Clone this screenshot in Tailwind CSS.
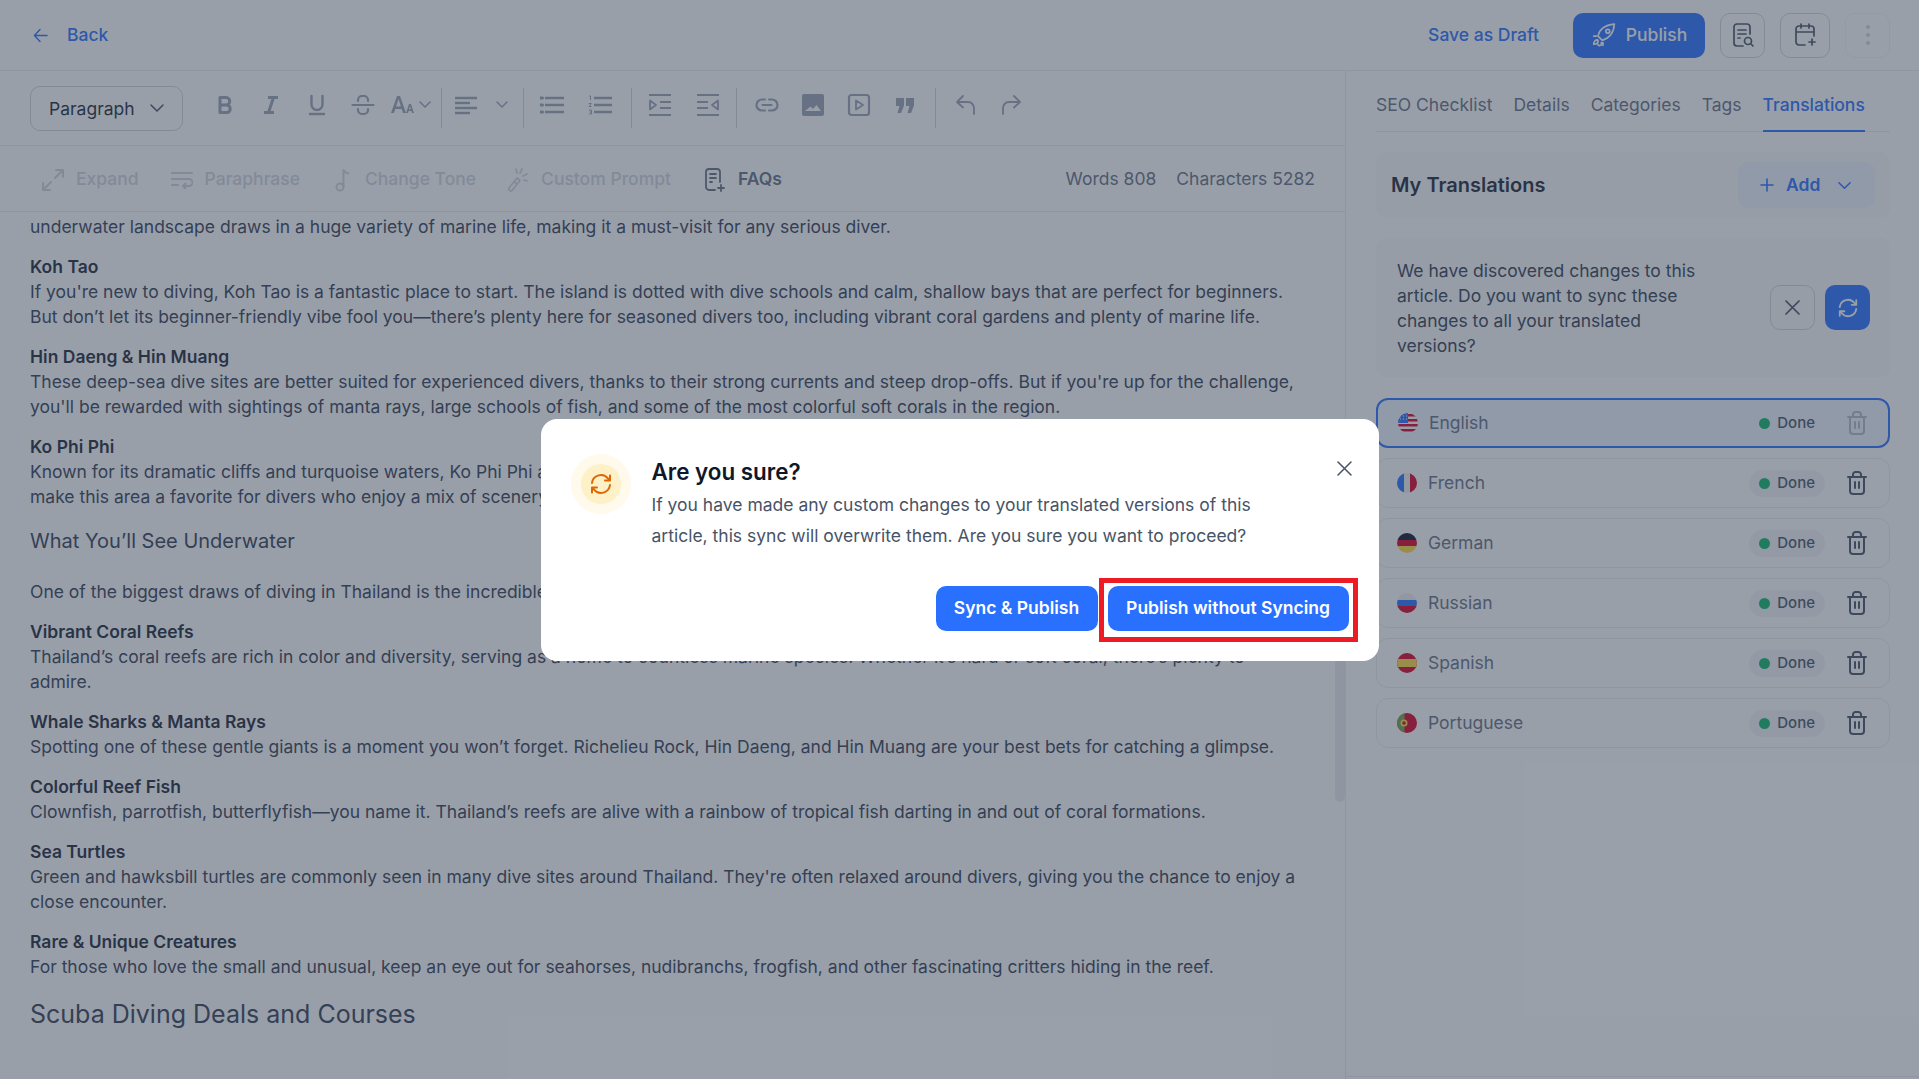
<!DOCTYPE html>
<html>
<head>
<meta charset="utf-8">
<script src="https://cdn.jsdelivr.net/npm/@tailwindcss/browser@4"></script>
</head>
<body class="font-['Inter',sans-serif] bg-white">
<div class="relative w-[1919px] h-[1079px] overflow-hidden flex flex-col text-[#344054]">
  <!-- header -->
  <header class="h-[71px] shrink-0 border-b border-[#EAECF0] flex items-center pl-[33px] pr-[29px]">
    <svg class="w-[15px] h-[15px] text-[#2970FF]" viewBox="0 0 16 16" fill="none" stroke="currentColor" stroke-width="1.5" stroke-linecap="round" stroke-linejoin="round"><path d="M15 8H1.5M7.5 1.5 1.5 8l6 6.5"/></svg>
    <span class="ml-[19px] text-[17.5px] font-medium text-[#2970FF]">Back</span>
    <span class="ml-auto text-[17.5px] font-medium text-[#2970FF]">Save as Draft</span>
    <button class="ml-[34px] w-[132px] h-[45px] rounded-[10px] bg-[#2970FF] text-white flex items-center justify-center gap-[9px] text-[17.5px] font-medium">
      <svg class="w-[26px] h-[26px]" viewBox="0 0 24 24" fill="none" stroke="currentColor" stroke-width="1.6" stroke-linecap="round" stroke-linejoin="round"><path d="M9 15.5 6.5 13c1-5 5.5-10 15-11-.5 9-6 13.5-11 15z"/><circle cx="15.5" cy="8.5" r="1.8"/><path d="M6 16.5c-2 0-3.5 1.5-3.5 4 2.500 0 4-1.500 4-3.500M9.500 19c0 1 .5 1.800-.5 2.500-1 .5-2 .2-2.500-.5M5 13H2.500M11 19v2.500"/></svg>
      Publish
    </button>
    <button class="ml-[15px] w-[45px] h-[45px] rounded-[10px] border border-[#D0D5DD] flex items-center justify-center text-[#475467]">
      <svg class="w-[24px] h-[26px]" viewBox="0 0 24 26" fill="none" stroke="currentColor" stroke-width="1.7" stroke-linecap="round" stroke-linejoin="round"><path d="M19 12V5a3 3 0 0 0-3-3H6a3 3 0 0 0-3 3v16a3 3 0 0 0 3 3h6"/><path d="M7 8h8M7 12h8M7 16h2"/><circle cx="17" cy="19" r="3.500"/><path d="m20 22 2 2"/></svg>
    </button>
    <button class="ml-[15px] w-[50px] h-[45px] rounded-[10px] border border-[#D0D5DD] flex items-center justify-center text-[#475467]">
      <svg class="w-[24px] h-[26px]" viewBox="0 0 24 26" fill="none" stroke="currentColor" stroke-width="1.7" stroke-linecap="round" stroke-linejoin="round"><path d="M12 23H6a3 3 0 0 1-3-3V7a3 3 0 0 1 3-3h12a3 3 0 0 1 3 3v7M3 10h18M8 2v4M16 2v4M19 17v6M16 20h6"/></svg>
    </button>
    <button class="ml-[15px] w-[45px] h-[45px] rounded-[10px] border border-[#F2F4F7] flex flex-col items-center justify-center gap-[4px]">
      <span class="w-[4px] h-[4px] rounded-full bg-[#D0D5DD]"></span><span class="w-[4px] h-[4px] rounded-full bg-[#D0D5DD]"></span><span class="w-[4px] h-[4px] rounded-full bg-[#D0D5DD]"></span>
    </button>
  </header>

  <div class="flex flex-1 min-h-0">
    <!-- editor -->
    <section class="w-[1346px] shrink-0 flex flex-col relative border-r border-[#EAECF0]">
      <!-- toolbar -->
      <div class="h-[75px] shrink-0 border-b border-[#EAECF0] flex items-center pl-[30px] text-[#98A2B3]">
        <div class="w-[153px] h-[45px] rounded-[10px] border border-[#D0D5DD] flex items-center pl-[18px] text-[#1D2939] text-[17.5px]"><span class="pt-[2px]">Paragraph</span>
          <svg class="ml-[14px] w-[16px] h-[16px] text-[#475467]" viewBox="0 0 16 16" fill="none" stroke="currentColor" stroke-width="1.5" stroke-linecap="round" stroke-linejoin="round"><path d="m2 5 6 6 6-6"/></svg>
        </div>
        <div class="ml-[19px] flex items-center -mt-[6px]">
          <span class="w-[46px] flex justify-center"><svg class="w-[24px] h-[24px]" viewBox="0 0 24 24" fill="none" stroke="currentColor" stroke-width="3" stroke-linejoin="round"><path d="M7 4.500h6a3.700 3.700 0 0 1 0 7.500H7zM7 12h7a3.800 3.800 0 0 1 0 7.500H7z"/></svg></span>
          <span class="w-[46px] flex justify-center"><svg class="w-[24px] h-[24px]" viewBox="0 0 24 24" fill="none" stroke="currentColor" stroke-width="3"><path d="M9 4.500h10M5 19.500h10M14.500 4.500l-5 15"/></svg></span>
          <span class="w-[46px] flex justify-center"><svg class="w-[24px] h-[24px]" viewBox="0 0 24 24" fill="none" stroke="currentColor" stroke-width="2.400" stroke-linecap="round"><path d="M6.500 3v8.500a5.500 5.500 0 0 0 11 0V3"/><path d="M4 21h16" stroke-linecap="butt"/></svg></span>
          <span class="w-[46px] flex justify-center"><svg class="w-[24px] h-[24px]" viewBox="0 0 24 24" fill="none" stroke="currentColor" stroke-width="2.200" stroke-linecap="round"><path d="M1.500 12h21M17 8V7a4 4 0 0 0-4-4h-2a4 4 0 0 0-4 4v1M7 16v1a4 4 0 0 0 4 4h2a4 4 0 0 0 4-4v-1"/></svg></span>
          <span class="w-[55px] flex items-center pl-[5px]">
            <svg class="w-[24px] h-[24px]" viewBox="0 0 24 24" fill="currentColor"><path d="M0 20 6 3h3l6 17h-3l-1.300-4H4.300L3 20zM5.100 13.500h4.800L7.500 6z"/><path d="M15 20l3-9h2l3 9h-2l-.6-2h-2.800l-.6 2zm3.100-3.700h1.800L19 13z"/></svg>
            <svg class="ml-[3px] w-[14px] h-[14px]" viewBox="0 0 14 14" fill="none" stroke="currentColor" stroke-width="1.500" stroke-linecap="round"><path d="m2 4 5 5 5-5"/></svg>
          </span>
          <span class="w-px h-[40px] bg-[#D0D5DD] mt-[6px]"></span>
          <span class="w-[81px] flex items-center pl-[12px]">
            <svg class="w-[24px] h-[24px]" viewBox="0 0 24 24" fill="none" stroke="currentColor" stroke-width="2.400"><path d="M1 5h22M1 10h15M1 15h22M1 20h15"/></svg>
            <svg class="ml-[17px] w-[14px] h-[14px]" viewBox="0 0 14 14" fill="none" stroke="currentColor" stroke-width="1.500" stroke-linecap="round"><path d="m2 4 5 5 5-5"/></svg>
          </span>
          <span class="w-px h-[40px] bg-[#D0D5DD] mt-[6px]"></span>
          <span class="w-[107px] flex items-center pl-[16px] gap-[24px]">
            <svg class="w-[24px] h-[24px]" viewBox="0 0 24 24" fill="none" stroke="currentColor" stroke-width="2.400"><path d="M5 5h19M5 12h19M5 19h19"/><path d="M.5 5h2M.5 12h2M.5 19h2" stroke-width="3" stroke-linecap="round"/></svg>
            <svg class="w-[24px] h-[24px]" viewBox="0 0 24 24" fill="none" stroke="currentColor" stroke-width="2.400"><path d="M6 5h18M6 12h18M6 19h18"/><path d="M1 3h1.500v4M.8 10.500h2.500L1 13.500h2.500M1 17h2.500v4H1M1.500 19h2" stroke-width="1"/></svg>
          </span>
          <span class="w-px h-[40px] bg-[#D0D5DD] mt-[6px]"></span>
          <span class="w-[104px] flex items-center pl-[16px] gap-[24px]">
            <svg class="w-[24px] h-[24px]" viewBox="0 0 24 24" fill="none" stroke="currentColor" stroke-width="2.200"><path d="M1 2h22M1 22h22M12 9h11M12 15h11"/><path d="M2 7.500 8 12l-6 4.500z" stroke-width="1.800" stroke-linejoin="round"/></svg>
            <svg class="w-[24px] h-[24px]" viewBox="0 0 24 24" fill="none" stroke="currentColor" stroke-width="2.200"><path d="M1 2h22M1 22h22M1 9h11M1 15h11"/><path d="M22 7.500 16 12l6 4.500z" stroke-width="1.800" stroke-linejoin="round"/></svg>
          </span>
          <span class="w-px h-[40px] bg-[#D0D5DD] mt-[6px]"></span>
          <span class="w-[198px] flex items-center pl-[18px] gap-[22px]">
            <svg class="w-[24px] h-[24px]" viewBox="0 0 24 24" fill="none" stroke="currentColor" stroke-width="2.200" stroke-linecap="round"><path d="M10 6.500H7a5.500 5.500 0 0 0 0 11h3M14 6.500h3a5.500 5.500 0 0 1 0 11h-3M7.500 12h9"/></svg>
            <svg class="w-[24px] h-[24px]" viewBox="0 0 24 24" fill="currentColor"><path fill-rule="evenodd" d="M3 1h18a2 2 0 0 1 2 2v18a2 2 0 0 1-2 2H3a2 2 0 0 1-2-2V3a2 2 0 0 1 2-2zm1 17h16l-4.500-6-3.500 4-2.500-2.500z"/></svg>
            <svg class="w-[24px] h-[24px]" viewBox="0 0 24 24" fill="none" stroke="currentColor" stroke-width="2.200" stroke-linejoin="round"><rect x="2" y="2" width="20" height="20" rx="2.500"/><path d="M9 7.500 16 12l-7 4.500z" stroke-width="1.800"/></svg>
            <svg class="w-[24px] h-[24px]" viewBox="0 0 24 24" fill="currentColor"><path d="M3 5h8v7.500L8 20H4.500L6.500 13H3zM13 5h8v7.500L18 20h-3.500l2-7H13z"/></svg>
          </span>
          <span class="w-px h-[40px] bg-[#D0D5DD] mt-[6px]"></span>
          <span class="flex items-center pl-[18px] gap-[21px]">
            <svg class="w-[24px] h-[24px]" viewBox="0 0 24 24" fill="none" stroke="currentColor" stroke-width="1.800" stroke-linecap="round" stroke-linejoin="round"><path d="M9 3 3 9l6 5.500M3 9h11a6 6 0 0 1 6 6v6"/></svg>
            <svg class="w-[24px] h-[24px]" viewBox="0 0 24 24" fill="none" stroke="currentColor" stroke-width="1.800" stroke-linecap="round" stroke-linejoin="round"><path d="m15 3 6 6-6 5.500M21 9H10a6 6 0 0 0-6 6v6"/></svg>
          </span>
        </div>
      </div>
      <!-- ai row -->
      <div class="h-[66px] shrink-0 border-b border-[#EAECF0] flex items-center pl-[42px] pr-[30px] pt-[2px] text-[17.5px] font-medium text-[#D0D5DD]">
        <svg class="w-[22px] h-[22px]" viewBox="0 0 22 22" fill="none" stroke="currentColor" stroke-width="2" stroke-linecap="round" stroke-linejoin="round"><path d="M13 9l8-8M14 1h7v7M9 13l-8 8M8 21H1v-7"/></svg>
        <span class="ml-[12px]">Expand</span>
        <svg class="ml-[32px] w-[22px] h-[18px]" viewBox="0 0 22 18" fill="none" stroke="currentColor" stroke-width="2" stroke-linecap="round" stroke-linejoin="round"><path d="M1 2h20M1 8h17a3 3 0 0 1 0 7h-6M14.500 12.500 12 15l2.500 2.500M1 14h6"/></svg>
        <span class="ml-[12px]">Paraphrase</span>
        <svg class="ml-[35px] w-[15px] h-[24px]" viewBox="0 0 15 24" fill="none" stroke="currentColor" stroke-width="2" stroke-linecap="round" stroke-linejoin="round"><circle cx="5" cy="19" r="3.500"/><path d="M8.500 19V2c1 2 2.500 3 5 3.500"/></svg>
        <span class="ml-[15px]">Change Tone</span>
        <svg class="ml-[31px] w-[21px] h-[24px]" viewBox="0 0 21 24" fill="none" stroke="currentColor" stroke-width="1.700" stroke-linecap="round" stroke-linejoin="round"><path d="m2 20 8-10 3 2.500-8 10a2 2 0 0 1-3-2.500zM7 13.500l3 2.500M9 1l1 4M15 1l-2 4M20 6l-4 2M20 13l-3-1"/></svg>
        <span class="ml-[13px]">Custom Prompt</span>
        <svg class="ml-[34px] w-[20px] h-[24px] text-[#667085]" viewBox="0 0 20 24" fill="none" stroke="currentColor" stroke-width="1.800" stroke-linecap="round" stroke-linejoin="round"><path d="M10 22H4a3 3 0 0 1-3-3V4a3 3 0 0 1 3-3h8a3 3 0 0 1 3 3v10M5 6h6M5 10h6M5 14h2M16 17v6M13 20h6"/></svg>
        <span class="ml-[13px] text-[#667085] font-semibold">FAQs</span>
        <span class="ml-auto font-normal text-[#667085]">Words 808</span>
        <span class="ml-[20px] font-normal text-[#667085]">Characters 5282</span>
      </div>
      <!-- article -->
      <div class="flex-1 min-h-0 overflow-hidden pl-[30px] pr-[40px] pt-[2px] text-[17.5px] leading-[25px] text-[#344054]">
        <p class="mb-[15px]">underwater landscape draws in a huge variety of marine life, making it a must-visit for any serious diver.</p>
        <p class="mb-[15px]"><b class="font-semibold text-[#1D2939]">Koh Tao</b><br>If you're new to diving, Koh Tao is a fantastic place to start. The island is dotted with dive schools and calm, shallow bays that are perfect for beginners.<br>But don’t let its beginner-friendly vibe fool you—there’s plenty here for seasoned divers too, including vibrant coral gardens and plenty of marine life.</p>
        <p class="mb-[15px]"><b class="font-semibold text-[#1D2939]">Hin Daeng &amp; Hin Muang</b><br>These deep-sea dive sites are better suited for experienced divers, thanks to their strong currents and steep drop-offs. But if you're up for the challenge,<br>you'll be rewarded with sightings of manta rays, large schools of fish, and some of the most colorful soft corals in the region.</p>
        <p class="mb-[20px]"><b class="font-semibold text-[#1D2939]">Ko Phi Phi</b><br>Known for its dramatic cliffs and turquoise waters, Ko Phi Phi and its neighboring islands offer a wide range of shallow reefs and deeper dive sites that<br>make this area a favorite for divers who enjoy a mix of scenery and marine life.</p>
        <h3 class="text-[20px] leading-[25px] mb-[25px] text-[#344054]">What You’ll See Underwater</h3>
        <p class="mb-[15px]">One of the biggest draws of diving in Thailand is the incredible range of marine life you can see here throughout the year.</p>
        <p class="mb-[15px]"><b class="font-semibold text-[#1D2939]">Vibrant Coral Reefs</b><br>Thailand’s coral reefs are rich in color and diversity, serving as a home to countless marine species. Whether it’s hard or soft coral, there’s plenty to<br>admire.</p>
        <p class="mb-[15px]"><b class="font-semibold text-[#1D2939]">Whale Sharks &amp; Manta Rays</b><br>Spotting one of these gentle giants is a moment you won’t forget. Richelieu Rock, Hin Daeng, and Hin Muang are your best bets for catching a glimpse.</p>
        <p class="mb-[15px]"><b class="font-semibold text-[#1D2939]">Colorful Reef Fish</b><br>Clownfish, parrotfish, butterflyfish—you name it. Thailand’s reefs are alive with a rainbow of tropical fish darting in and out of coral formations.</p>
        <p class="mb-[15px]"><b class="font-semibold text-[#1D2939]">Sea Turtles</b><br>Green and hawksbill turtles are commonly seen in many dive sites around Thailand. They're often relaxed around divers, giving you the chance to enjoy a<br>close encounter.</p>
        <p class="mb-[20px]"><b class="font-semibold text-[#1D2939]">Rare &amp; Unique Creatures</b><br>For those who love the small and unusual, keep an eye out for seahorses, nudibranchs, frogfish, and other fascinating critters hiding in the reef.</p>
        <h2 class="text-[25px] leading-[30px] text-[#344054]">Scuba Diving Deals and Courses</h2>
      </div>
      <div class="absolute right-0 top-[430px] h-[301px] w-[10px] rounded-full bg-[#EAECF0]"></div>
    </section>
    <!-- right panel -->
    <aside class="flex-1 min-w-0 pl-[30px] pr-[29px] mb-[2px] border-b border-[#EAECF0] flex flex-col">
      <nav class="h-[61px] shrink-0 border-b border-[#EAECF0] flex gap-[21px] text-[17.5px] text-[#667085]">
        <span class="pt-[24px] leading-[20px]">SEO Checklist</span>
        <span class="pt-[24px] leading-[20px]">Details</span>
        <span class="pt-[24px] leading-[20px]">Categories</span>
        <span class="pt-[24px] leading-[20px]">Tags</span>
        <span class="pt-[24px] leading-[20px] h-[61px] border-b-2 border-[#2970FF] text-[#2970FF] font-medium">Translations</span>
      </nav>
      <div class="mt-[20px] h-[66px] shrink-0 rounded-[10px] bg-[#F9FAFB] flex items-center pl-[15px] pr-[15px]">
        <span class="text-[20px] font-semibold text-[#1D2939]">My Translations</span>
        <button class="ml-auto w-[137px] h-[46px] rounded-[10px] bg-[#EFF4FF] flex items-center pl-[22px] text-[#2970FF] text-[17.5px] font-semibold">
          <svg class="w-[14px] h-[14px]" viewBox="0 0 14 14" fill="none" stroke="currentColor" stroke-width="1.600" stroke-linecap="round"><path d="M7 1v12M1 7h12"/></svg>
          <span class="ml-[12px]">Add</span>
          <svg class="ml-[17px] w-[15px] h-[15px]" viewBox="0 0 16 16" fill="none" stroke="currentColor" stroke-width="1.600" stroke-linecap="round" stroke-linejoin="round"><path d="m2 5 6 6 6-6"/></svg>
        </button>
      </div>
      <div class="mt-[20px] h-[139px] shrink-0 rounded-[10px] bg-[#F9FAFB] flex items-center pl-[21px] pr-[20px]">
        <p class="w-[320px] text-[17.5px] leading-[25px] text-[#344054]">We have discovered changes to this article. Do you want to sync these changes to all your translated versions?</p>
        <button class="ml-auto w-[45px] h-[45px] rounded-[10px] border border-[#D0D5DD] flex items-center justify-center text-[#475467]">
          <svg class="w-[15px] h-[15px]" viewBox="0 0 15 15" fill="none" stroke="currentColor" stroke-width="1.700" stroke-linecap="round"><path d="m1 1 13 13M14 1 1 14"/></svg>
        </button>
        <button class="ml-[10px] w-[45px] h-[45px] rounded-[10px] bg-[#2970FF] flex items-center justify-center text-white">
          <svg class="w-[22px] h-[22px]" viewBox="0 0 24 24" fill="none" stroke="currentColor" stroke-width="2" stroke-linecap="round" stroke-linejoin="round"><path d="M3 11a9 9 0 0 1 16-4.500l1.500 1.500M21 13a9 9 0 0 1-16 4.500L3.500 16"/><path d="M21 3.500V8.500h-5M3 20.500v-5h5"/></svg>
        </button>
      </div>
      <div class="mt-[21px] flex flex-col gap-[10px]">
        <!-- English -->
        <div class="h-[50px] rounded-[12px] border-2 border-[#2970FF] bg-[#EFF4FF] flex items-center pl-[20px] pr-[20px]">
          <svg class="w-[20px] h-[20px]" viewBox="0 0 20 20"><defs><clipPath id="c1"><circle cx="10" cy="10" r="10"/></clipPath></defs><g clip-path="url(#c1)"><rect width="20" height="20" fill="#fff"/><path d="M0 1h20v2.500H0zM0 6h20v2.500H0zM0 11h20v2.500H0zM0 16h20v2.500H0z" fill="#D80027"/><rect width="10" height="10" fill="#2970FF"/><path d="M2 3h1M5 3h1M8 3h1M2 6h1M5 6h1M8 6h1" stroke="#fff"/></g></svg>
          <span class="ml-[11px] text-[17.5px] text-[#667085]">English</span>
          <span class="ml-auto h-[27px] rounded-full flex items-center px-[10px] text-[15px] font-medium text-[#475467]"><i class="w-[11px] h-[11px] rounded-full bg-[#12B76A]"></i><span class="ml-[7px]">Done</span></span>
          <svg class="ml-[21px] w-[22px] h-[24px] text-[#98A2B3] opacity-70" viewBox="0 0 22 24" fill="none" stroke="currentColor" stroke-width="2" stroke-linecap="round" stroke-linejoin="round"><path d="M2 6h18M4 6v14a3 3 0 0 0 3 3h8a3 3 0 0 0 3-3V6M7 5V3.500A2.500 2.500 0 0 1 9.500 1h3A2.500 2.500 0 0 1 15 3.500V5M9 11v6M13 11v6"/></svg>
        </div>
        <!-- French -->
        <div class="h-[50px] rounded-[12px] border border-[#EAECF0] flex items-center pl-[20px] pr-[21px]">
          <svg class="w-[20px] h-[20px]" viewBox="0 0 20 20"><defs><clipPath id="c2"><circle cx="10" cy="10" r="10"/></clipPath></defs><g clip-path="url(#c2)"><rect width="7" height="20" fill="#2970FF"/><rect x="7" width="6" height="20" fill="#F0F0F0"/><rect x="13" width="7" height="20" fill="#D80027"/></g></svg>
          <span class="ml-[11px] text-[17.5px] text-[#667085]">French</span>
          <span class="ml-auto h-[27px] rounded-full bg-[#F2F4F7] flex items-center px-[10px] text-[15px] font-medium text-[#475467]"><i class="w-[11px] h-[11px] rounded-full bg-[#12B76A]"></i><span class="ml-[7px]">Done</span></span>
          <svg class="ml-[21px] w-[22px] h-[24px] text-[#475467]" viewBox="0 0 22 24" fill="none" stroke="currentColor" stroke-width="2" stroke-linecap="round" stroke-linejoin="round"><path d="M2 6h18M4 6v14a3 3 0 0 0 3 3h8a3 3 0 0 0 3-3V6M7 5V3.500A2.500 2.500 0 0 1 9.500 1h3A2.500 2.500 0 0 1 15 3.500V5M9 11v6M13 11v6"/></svg>
        </div>
        <!-- German -->
        <div class="h-[50px] rounded-[12px] border border-[#EAECF0] flex items-center pl-[20px] pr-[21px]">
          <svg class="w-[20px] h-[20px]" viewBox="0 0 20 20"><defs><clipPath id="c3"><circle cx="10" cy="10" r="10"/></clipPath></defs><g clip-path="url(#c3)"><rect width="20" height="7" fill="#101828"/><rect y="7" width="20" height="6" fill="#D80027"/><rect y="13" width="20" height="7" fill="#FFDA44"/></g></svg>
          <span class="ml-[11px] text-[17.5px] text-[#667085]">German</span>
          <span class="ml-auto h-[27px] rounded-full bg-[#F2F4F7] flex items-center px-[10px] text-[15px] font-medium text-[#475467]"><i class="w-[11px] h-[11px] rounded-full bg-[#12B76A]"></i><span class="ml-[7px]">Done</span></span>
          <svg class="ml-[21px] w-[22px] h-[24px] text-[#475467]" viewBox="0 0 22 24" fill="none" stroke="currentColor" stroke-width="2" stroke-linecap="round" stroke-linejoin="round"><path d="M2 6h18M4 6v14a3 3 0 0 0 3 3h8a3 3 0 0 0 3-3V6M7 5V3.500A2.500 2.500 0 0 1 9.500 1h3A2.500 2.500 0 0 1 15 3.500V5M9 11v6M13 11v6"/></svg>
        </div>
        <!-- Russian -->
        <div class="h-[50px] rounded-[12px] border border-[#EAECF0] flex items-center pl-[20px] pr-[21px]">
          <svg class="w-[20px] h-[20px]" viewBox="0 0 20 20"><defs><clipPath id="c4"><circle cx="10" cy="10" r="10"/></clipPath></defs><g clip-path="url(#c4)"><rect width="20" height="7" fill="#F0F0F0"/><rect y="7" width="20" height="6" fill="#2970FF"/><rect y="13" width="20" height="7" fill="#D80027"/></g></svg>
          <span class="ml-[11px] text-[17.5px] text-[#667085]">Russian</span>
          <span class="ml-auto h-[27px] rounded-full bg-[#F2F4F7] flex items-center px-[10px] text-[15px] font-medium text-[#475467]"><i class="w-[11px] h-[11px] rounded-full bg-[#12B76A]"></i><span class="ml-[7px]">Done</span></span>
          <svg class="ml-[21px] w-[22px] h-[24px] text-[#475467]" viewBox="0 0 22 24" fill="none" stroke="currentColor" stroke-width="2" stroke-linecap="round" stroke-linejoin="round"><path d="M2 6h18M4 6v14a3 3 0 0 0 3 3h8a3 3 0 0 0 3-3V6M7 5V3.500A2.500 2.500 0 0 1 9.500 1h3A2.500 2.500 0 0 1 15 3.500V5M9 11v6M13 11v6"/></svg>
        </div>
        <!-- Spanish -->
        <div class="h-[50px] rounded-[12px] border border-[#EAECF0] flex items-center pl-[20px] pr-[21px]">
          <svg class="w-[20px] h-[20px]" viewBox="0 0 20 20"><defs><clipPath id="c5"><circle cx="10" cy="10" r="10"/></clipPath></defs><g clip-path="url(#c5)"><rect width="20" height="20" fill="#D80027"/><rect y="6" width="20" height="8" fill="#FFDA44"/></g></svg>
          <span class="ml-[11px] text-[17.5px] text-[#667085]">Spanish</span>
          <span class="ml-auto h-[27px] rounded-full bg-[#F2F4F7] flex items-center px-[10px] text-[15px] font-medium text-[#475467]"><i class="w-[11px] h-[11px] rounded-full bg-[#12B76A]"></i><span class="ml-[7px]">Done</span></span>
          <svg class="ml-[21px] w-[22px] h-[24px] text-[#475467]" viewBox="0 0 22 24" fill="none" stroke="currentColor" stroke-width="2" stroke-linecap="round" stroke-linejoin="round"><path d="M2 6h18M4 6v14a3 3 0 0 0 3 3h8a3 3 0 0 0 3-3V6M7 5V3.500A2.500 2.500 0 0 1 9.500 1h3A2.500 2.500 0 0 1 15 3.500V5M9 11v6M13 11v6"/></svg>
        </div>
        <!-- Portuguese -->
        <div class="h-[50px] rounded-[12px] border border-[#EAECF0] flex items-center pl-[20px] pr-[21px]">
          <svg class="w-[20px] h-[20px]" viewBox="0 0 20 20"><defs><clipPath id="c6"><circle cx="10" cy="10" r="10"/></clipPath></defs><g clip-path="url(#c6)"><rect width="20" height="20" fill="#D80027"/><rect width="7.500" height="20" fill="#6DA544"/><circle cx="7" cy="10" r="3.500" fill="#FFDA44"/><circle cx="7" cy="10" r="1.800" fill="#D80027"/></g></svg>
          <span class="ml-[11px] text-[17.5px] text-[#667085]">Portuguese</span>
          <span class="ml-auto h-[27px] rounded-full bg-[#F2F4F7] flex items-center px-[10px] text-[15px] font-medium text-[#475467]"><i class="w-[11px] h-[11px] rounded-full bg-[#12B76A]"></i><span class="ml-[7px]">Done</span></span>
          <svg class="ml-[21px] w-[22px] h-[24px] text-[#475467]" viewBox="0 0 22 24" fill="none" stroke="currentColor" stroke-width="2" stroke-linecap="round" stroke-linejoin="round"><path d="M2 6h18M4 6v14a3 3 0 0 0 3 3h8a3 3 0 0 0 3-3V6M7 5V3.500A2.500 2.500 0 0 1 9.500 1h3A2.500 2.500 0 0 1 15 3.500V5M9 11v6M13 11v6"/></svg>
        </div>
      </div>
    </aside>
  </div>

  <!-- overlay -->
  <div class="absolute inset-0 bg-[#344054]/50 flex items-center justify-center">
    <div class="relative w-[838px] h-[242px] bg-white rounded-[16px] pt-[35px] pl-[30px] pr-[30px]">
      <div class="flex">
        <div class="w-[60px] h-[60px] rounded-full bg-[#FFFAEB] flex items-center justify-center shrink-0">
          <div class="w-[40px] h-[40px] rounded-full bg-[#FEF0C7] flex items-center justify-center text-[#DC6803]">
            <svg class="w-[24px] h-[24px]" viewBox="0 0 24 24" fill="none" stroke="currentColor" stroke-width="2" stroke-linecap="round" stroke-linejoin="round"><path d="M3 11a9 9 0 0 1 16-4.500l1.500 1.500M21 13a9 9 0 0 1-16 4.500L3.500 16"/><path d="M21 3.500V8.500h-5M3 20.500v-5h5"/></svg>
          </div>
        </div>
        <div class="ml-[21px]">
          <h2 class="text-[22.4px] leading-[36px] font-semibold text-[#101828]">Are you sure?</h2>
          <p class="-mt-[1px] text-[17.5px] leading-[31px] text-[#475467]">If you have made any custom changes to your translated versions of this<br>article, this sync will overwrite them. Are you sure you want to proceed?</p>
        </div>
      </div>
      <button class="absolute top-[42px] right-[27px] text-[#475467]">
        <svg class="w-[15px] h-[15px]" viewBox="0 0 15 15" fill="none" stroke="currentColor" stroke-width="1.500" stroke-linecap="round"><path d="m1 1 13 13M14 1 1 14"/></svg>
      </button>
      <div class="absolute right-[30px] bottom-[30px] flex gap-[10px]">
        <button class="w-[162px] h-[45px] rounded-[10px] bg-[#2970FF] text-white text-[17.5px] font-semibold">Sync &amp; Publish</button>
        <button class="w-[241px] h-[45px] rounded-[10px] bg-[#2970FF] text-white text-[17.5px] font-semibold">Publish without Syncing</button>
      </div>
      <div class="absolute left-[558px] top-[159px] w-[259px] h-[64px] border-[5px] border-[#ED1C24]"></div>
    </div>
  </div>
</div>
</body>
</html>
